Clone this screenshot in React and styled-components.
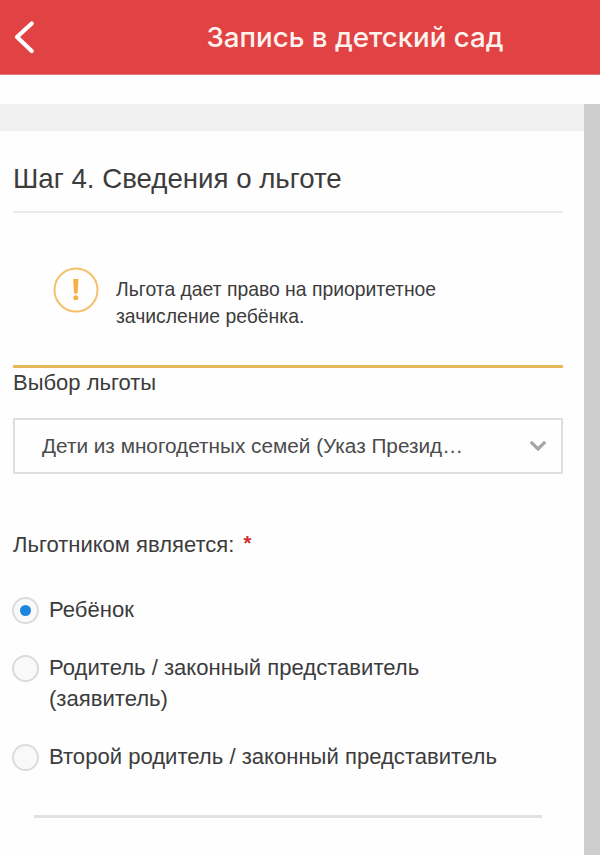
import React, { useState } from "react";
import styled, { createGlobalStyle } from "styled-components";

const GlobalStyle = createGlobalStyle`
  * {
    box-sizing: border-box;
  }
  body {
    margin: 0;
    background: #fff;
  }
`;

const Page = styled.div`
  width: 600px;
  height: 855px;
  overflow: hidden;
  display: flex;
  flex-direction: column;
  background: #fefefe;
  font-family: "Liberation Sans", Arial, sans-serif;
  color: #3c3c3c;
`;

const Header = styled.header`
  flex: none;
  height: 75px;
  display: flex;
  align-items: center;
  background: #e14243;
  border-bottom: 1px solid #e07a7b;
`;

const BackButton = styled.button`
  width: 110px;
  height: 74px;
  padding: 0 0 0 12px;
  border: none;
  background: none;
  display: flex;
  align-items: center;
`;

const Title = styled.h1`
  flex: 1;
  margin: 0;
  padding-bottom: 1px;
  text-align: center;
  font-family: Inter, sans-serif;
  font-size: 27.7px;
  font-weight: 500;
  white-space: nowrap;
  color: #fff3ef;
`;

const Scroller = styled.div`
  flex: 1;
  margin-top: 29px;
  display: flex;
`;

const Content = styled.main`
  width: 584px;
`;

const Gutter = styled.div`
  flex: 1;
  background: #cecece;
`;

const Band = styled.div`
  height: 27px;
  background: #f0f0f0;
`;

const Form = styled.form`
  padding: 0 21px 0 13px;
`;

const StepTitle = styled.h2`
  height: 82px;
  margin: 0;
  padding-top: 32px;
  font-size: 27.65px;
  font-weight: 400;
  line-height: 32px;
  white-space: nowrap;
  border-bottom: 2px solid #e9e9e9;
`;

const Notice = styled.div`
  display: flex;
  height: 155px;
  padding: 54px 0 0 40px;
  border-bottom: 3px solid #e8b757;
`;

const NoticeText = styled.p`
  width: 340px;
  margin: 9px 0 0 17px;
  font-size: 19.35px;
  line-height: 27.4px;
`;

const Label = styled.div`
  font-size: 22px;
  line-height: 26px;
  margin-top: ${props => props.$top}px;
  white-space: nowrap;
`;

const Required = styled.span`
  color: #d0282c;
  font-size: 20px;
  font-weight: 700;
  line-height: 1;
  margin-left: 3px;
  vertical-align: 2px;
`;

const Select = styled.div`
  height: 56px;
  margin-top: 22px;
  padding: 0 14px 0 27px;
  display: flex;
  align-items: center;
  justify-content: space-between;
  border: 2px solid #dedede;
  font-size: 20.75px;
  color: #4b4b4b;
  white-space: nowrap;
`;

const Options = styled.div`
  margin: 37px 0 0 -1px;
  display: flex;
  flex-direction: column;
  gap: 28px;
`;

const Option = styled.label`
  display: flex;
  font-size: 22.08px;
  line-height: 30.4px;
`;

const Radio = styled.span`
  flex: none;
  width: 27px;
  height: 27px;
  margin: 2px 10px 0 0;
  display: flex;
  align-items: center;
  justify-content: center;
  border: 2px solid #dbdbdb;
  border-radius: 50%;
  background: #f9f9f9;
  &::after {
    content: "";
    width: 11px;
    height: 11px;
    border-radius: 50%;
    background: ${props => (props.$checked ? "#1d86dc" : "transparent")};
  }
`;

const Divider = styled.hr`
  height: 3px;
  margin: 42.4px 21px 0;
  border: none;
  background: #e1e1e1;
`;

const options = [
  ["Ребёнок"],
  ["Родитель / законный представитель", "(заявитель)"],
  ["Второй родитель / законный представитель"]
];

function App() {
  const [selected, setSelected] = useState(0);
  return (
    <Page>
      <GlobalStyle />
      <Header>
        <BackButton type="button" aria-label="Назад">
          <svg width="24" height="36" viewBox="0 0 24 36" fill="none">
            <path
              d="M19.7 4.5L5 18l14.7 14"
              stroke="#fff"
              strokeWidth="4.2"
              strokeLinecap="round"
              strokeLinejoin="round"
            />
          </svg>
        </BackButton>
        <Title>Запись в детский сад</Title>
      </Header>
      <Scroller>
        <Content>
          <Band />
          <Form>
            <StepTitle>Шаг 4. Сведения о льготе</StepTitle>
            <Notice>
              <svg width="46" height="46" viewBox="0 0 46 46">
                <circle
                  cx="23"
                  cy="23"
                  r="21.5"
                  fill="none"
                  stroke="#f5c06a"
                  strokeWidth="2"
                />
                <path d="M20.2 12h5.2l-.8 14.6h-3.6z" fill="#f6b145" />
                <circle cx="22.8" cy="30.8" r="2.5" fill="#f6b145" />
              </svg>
              <NoticeText>
                Льгота дает право на приоритетное зачисление ребёнка.
              </NoticeText>
            </Notice>
            <Label $top={2}>Выбор льготы</Label>
            <Select>
              Дети из многодетных семей (Указ Презид…
              <svg width="18" height="12" viewBox="0 0 18 12" fill="none">
                <path d="M1.8 1.8L9 9l7.2-7.2" stroke="#a6a6a6" strokeWidth="3.2" />
              </svg>
            </Select>
            <Label $top={58}>
              Льготником является: <Required>*</Required>
            </Label>
            <Options>
              {options.map((lines, i) => (
                <Option key={i} onClick={() => setSelected(i)}>
                  <Radio $checked={selected === i} />
                  <span>
                    {lines.map(line => (
                      <div key={line}>{line}</div>
                    ))}
                  </span>
                </Option>
              ))}
            </Options>
            <Divider />
          </Form>
        </Content>
        <Gutter />
      </Scroller>
    </Page>
  );
}

export default App;
